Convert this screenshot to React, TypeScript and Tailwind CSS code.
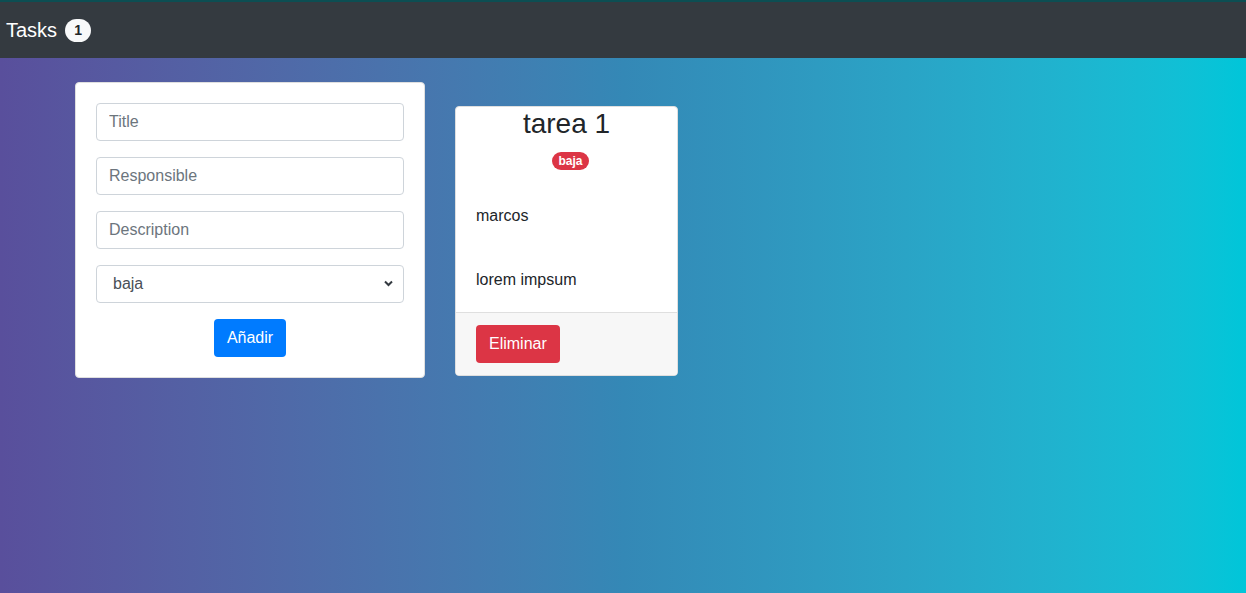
import React from 'react';

const font = { fontFamily: '"Liberation Sans", Arial, sans-serif' };

function Navbar() {
  return (
    <nav className="border-t-2 border-[#0c4e53] bg-[#343a40] h-[58px] flex items-center px-[6px]">
      <span className="text-white text-[20px] leading-none">Tasks</span>
      <span className="ml-[8px] inline-flex items-center justify-center h-[23px] w-[26px] rounded-full bg-[#f8f9fa] text-[#212529] text-[14px] font-bold">
        1
      </span>
    </nav>
  );
}

function TaskForm() {
  const input =
    'w-full h-[38px] rounded-[4px] border border-[#ced4da] bg-white px-[12px] text-[16px] text-[#495057] placeholder:text-[#6c757d] outline-none';
  return (
    <form className="w-[350px] bg-white rounded-[4px] border border-[#dfdfdf] p-[20px] flex flex-col gap-[16px]">
      <input className={input} placeholder="Title" />
      <input className={input} placeholder="Responsible" />
      <input className={input} placeholder="Description" />
      <div className="relative">
        <select className={input + ' appearance-none pl-[16px]'} defaultValue="baja">
          <option>baja</option>
          <option>media</option>
          <option>alta</option>
        </select>
        <svg
          className="absolute right-[11px] top-[15px] pointer-events-none"
          width="9"
          height="7"
          viewBox="0 0 9 7"
          fill="none"
          stroke="#343a40"
          strokeWidth="2"
        >
          <path d="M1 1.5l3.5 3.5 3.5-3.5" />
        </svg>
      </div>
      <div className="flex justify-center">
        <button type="button" className="h-[38px] px-[13px] rounded-[4px] bg-[#007bff] text-white text-[16px]">
          Añadir
        </button>
      </div>
    </form>
  );
}

function TaskCard() {
  return (
    <div className="w-[223px] bg-white rounded-[4px] border border-[#dfdfdf] overflow-hidden text-[#212529]">
      <div className="text-center">
        <h3 className="text-[28px] leading-[34px] mb-[8px]">tarea 1</h3>
        <div className="h-[35px] pt-[3px] pl-[8px] flex justify-center items-start">
          <span className="inline-flex items-center h-[18px] px-[6.5px] rounded-full bg-[#dc3545] text-white text-[12px] font-bold">
            baja
          </span>
        </div>
      </div>
      <div className="px-[20px] pt-[20px] pb-[20px] text-[16px] leading-[24px]">
        <p className="mb-[40px]">marcos</p>
        <p>lorem impsum</p>
      </div>
      <div className="border-t border-[#dfdfdf] bg-[#f7f7f7] px-[20px] py-[12px]">
        <button type="button" className="h-[38px] px-[13px] rounded-[4px] bg-[#dc3545] text-white text-[16px]">
          Eliminar
        </button>
      </div>
    </div>
  );
}

export default function App() {
  return (
    <div style={font} className="min-h-[593px] flex flex-col">
      <Navbar />
      <main className="flex-1 bg-gradient-to-r from-[#594f9c] via-[#3488b6] to-[#00c6d9] pl-[75px] pt-[24px]">
        <div className="flex items-start gap-[30px]">
          <TaskForm />
          <div className="mt-[24px]">
            <TaskCard />
          </div>
        </div>
      </main>
    </div>
  );
}
